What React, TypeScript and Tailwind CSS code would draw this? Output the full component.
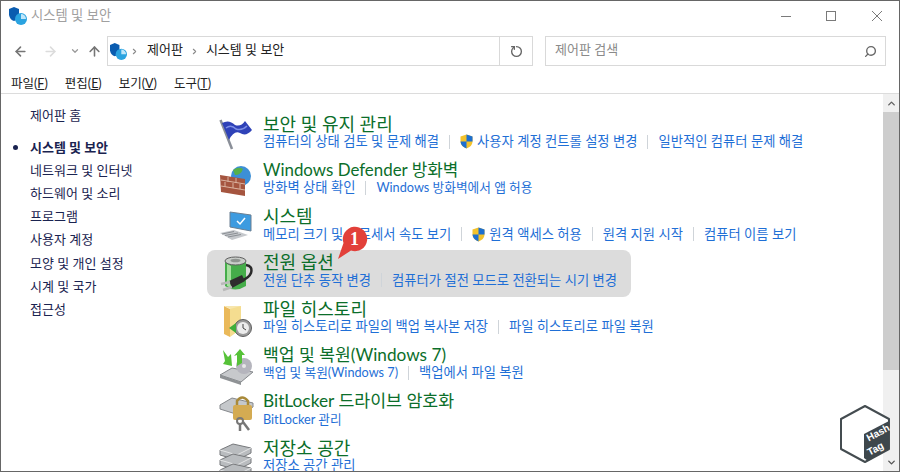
import { ArrowLeft, ArrowRight, ArrowUp, ChevronDown, ChevronRight, ChevronUp, RotateCw, Search } from "lucide-react";

const FONT = "font-['Lato','Noto_Sans_CJK_KR',sans-serif]";

const CpIcon = ({ size = 20 }: { size?: number }) => (
  <svg width={size} height={size} viewBox="1 1 18 18">
    <path d="M1 3 L6 1 L11 3 L11 9 Q10 14 6 15 Q2 14 1 9 Z" fill="#0a5cb0" />
    <circle cx="13" cy="13" r="6" fill="#2aa3e0" />
    <path d="M13 13 L13 8 A5 5 0 0 1 18 13 Z" fill="#bfe6fa" />
  </svg>
);

const FlagIcon = () => (
  <svg width="34" height="32" viewBox="0 0 34 32">
    <path d="M1.5 2 L13 31" stroke="#8a8f98" strokeWidth="2.5" />
    <path d="M3 5 Q10 1 16 7 Q22 9 26 3 L33 12 Q27 19 21 15 Q15 12 10 22 Z" fill="#2f42b8" />
    <path d="M7 10 Q12 6 17 11 Q23 13 28 8" stroke="#7d8fe6" strokeWidth="1.5" fill="none" />
  </svg>
);

const WallIcon = () => (
  <svg width="34" height="34" viewBox="0 0 34 34">
    <circle cx="22" cy="12" r="10" fill="#3c8fd6" />
    <path d="M14 6 Q20 2 24 5 Q22 11 16 11 Z" fill="#57b04a" />
    <path d="M1 11 L26 15 L26 32 L2 28 Z" fill="#a5553f" />
    <path d="M2 16 L26 20 M2 22 L26 26 M9 13 L9 18 M17 14 L17 19 M6 18 L6 23 M14 19 L14 24 M21 20 L21 25" stroke="#dbb3a0" strokeWidth="1" fill="none" />
  </svg>
);

const PcIcon = () => (
  <svg width="34" height="32" viewBox="0 0 34 32">
    <path d="M11 2 L32 5 L32 21 L11 17 Z" fill="#3d9be0" stroke="#6a7f92" />
    <path d="M18 11 L21 14 L26 8" stroke="#fff" strokeWidth="1.5" fill="none" />
    <path d="M1 23 L15 20 L29 25 L13 30 Z" fill="#c5c8cc" />
    <path d="M3 24 L15 21.5 M6 25.5 L19 23 M9 27 L22 24.5" stroke="#8b8f94" fill="none" />
  </svg>
);

const BatteryIcon = () => (
  <svg width="34" height="36" viewBox="0 0 34 36">
    <path d="M6 6 L6 30 Q16 37 27 30 L27 6 Z" fill="#45ad4a" />
    <path d="M8 8 L8 30 L12 32 L12 10 Z" fill="#a5e09d" />
    <ellipse cx="16.5" cy="5" rx="10.5" ry="4" fill="#c9cdc9" stroke="#5f5f5f" />
    <ellipse cx="16.5" cy="4.5" rx="5" ry="1.8" fill="#8f9490" />
    <path d="M27 9 Q34 10 32 17 Q30 22 22 25" stroke="#2a2a2a" strokeWidth="2.5" fill="none" />
    <path d="M10 25 L23 19 L26 25 L13 32 Z" fill="#2d2d2d" />
    <path d="M11 26 L2 28 M13 31 L4 34" stroke="#b9b9b9" strokeWidth="2.5" />
  </svg>
);

const FolderIcon = () => (
  <svg width="34" height="34" viewBox="0 0 34 34">
    <path d="M5 3 L11 6 L11 34 L5 31 Z" fill="#eab95a" />
    <path d="M11 3 L22 3 L22 26 L11 34 Z" fill="#f5dd90" />
    <path d="M5 3 L22 3 L11 6 Z" fill="#f7e6ad" />
    <circle cx="24" cy="25" r="8.5" fill="#9a9a9a" stroke="#5e5e5e" />
    <circle cx="24" cy="25" r="6" fill="#ececec" />
    <path d="M24 21 L24 25 L27 27" stroke="#444" fill="none" />
    <path d="M10 25 L17 20 L17 30 Z" fill="#3fae3c" />
  </svg>
);

const BackupIcon = () => (
  <svg width="36" height="36" viewBox="0 0 36 36">
    <path d="M1 26 L13 19 L34 23 L22 33 Z" fill="#c7c9cc" stroke="#85888c" />
    <path d="M1 26 L22 33 L22 36 L1 29 Z" fill="#8f9295" />
    <circle cx="25" cy="17" r="8" fill="#b5b5bd" />
    <circle cx="25" cy="17" r="2" fill="#e8e8e8" />
    <path d="M4 1 L9 8 L12 5 L13 17 L4 15 L6 12 Z" fill="#56c238" />
    <path d="M18 17 L18 6 L15 7 L21 0 L26 6 L23 6 L23 14 Z" fill="#56c238" />
  </svg>
);

const LockIcon = () => (
  <svg width="36" height="36" viewBox="0 0 36 36">
    <path d="M1 10 L13 3 L34 8 L34 12 L20 20 L1 14 Z" fill="#c5c8cb" stroke="#85888c" />
    <path d="M18 11 L18 6 Q23 -1 29 6 L29 11" stroke="#a98a3a" strokeWidth="2.5" fill="none" />
    <rect x="14" y="10" width="19" height="15" rx="2" fill="#d4ab52" />
    <circle cx="21" cy="26" r="3" fill="none" stroke="#777" strokeWidth="2" />
    <path d="M21 28 L21 36 M24 27 L30 35" stroke="#777" strokeWidth="2.5" />
  </svg>
);

const DriveIcon = () => (
  <svg width="36" height="36" viewBox="0 0 36 36">
    {[0, 10, 20].map((y) => (
      <g key={y}>
        <path d={`M1 ${8 + y} L14 ${2 + y} L32 ${6 + y} L32 ${11 + y} L18 ${18 + y} L1 ${13 + y} Z`} fill="#b9bcbf" stroke="#77797c" />
        <path d={`M1 ${8 + y} L18 ${13 + y} L32 ${6 + y}`} stroke="#e4e5e6" fill="none" />
        <rect x="16" y={14 + y} width="2" height="2.5" fill="#58c23a" />
      </g>
    ))}
  </svg>
);

const Sep = () => <span className="mx-[10px] h-[14px] w-px bg-[#cfd4d9]" />;

const ShieldIcon = () => (
  <svg width="13" height="15" viewBox="0 0 13 15" className="mr-[4px]">
    <path d="M6.5 0.5 L12.5 2.5 L12.5 8 Q12 12.5 6.5 14.5 Q1 12.5 0.5 8 L0.5 2.5 Z" fill="#f3c22b" />
    <path d="M6.5 0.5 L12.5 2.5 L12.5 7.5 L6.5 7.5 Z M6.5 7.5 L6.5 14.5 Q1 12.5 0.5 7.5 Z" fill="#1d6fd0" />
  </svg>
);

type LinkItem = { label: string; shield?: boolean; latin?: boolean };

const rows: { title: string; titleSize?: string; links: LinkItem[]; icon: React.ReactNode; active?: boolean }[] = [
  {
    title: "보안 및 유지 관리",
    icon: <FlagIcon />,
    links: [
      { label: "컴퓨터의 상태 검토 및 문제 해결" },
      { label: "사용자 계정 컨트롤 설정 변경", shield: true },
      { label: "일반적인 컴퓨터 문제 해결" },
    ],
  },
  {
    title: "Windows Defender 방화벽",
    titleSize: "text-[16.9px]",
    icon: <WallIcon />,
    links: [{ label: "방화벽 상태 확인" }, { label: "Windows 방화벽에서 앱 허용", latin: true }],
  },
  {
    title: "시스템",
    icon: <PcIcon />,
    links: [
      { label: "메모리 크기 및 프로세서 속도 보기" },
      { label: "원격 액세스 허용", shield: true },
      { label: "원격 지원 시작" },
      { label: "컴퓨터 이름 보기" },
    ],
  },
  {
    title: "전원 옵션",
    icon: <BatteryIcon />,
    active: true,
    links: [{ label: "전원 단추 동작 변경" }, { label: "컴퓨터가 절전 모드로 전환되는 시기 변경" }],
  },
  {
    title: "파일 히스토리",
    icon: <FolderIcon />,
    links: [{ label: "파일 히스토리로 파일의 백업 복사본 저장" }, { label: "파일 히스토리로 파일 복원" }],
  },
  {
    title: "백업 및 복원(Windows 7)",
    titleSize: "text-[17.2px]",
    icon: <BackupIcon />,
    links: [{ label: "백업 및 복원(Windows 7)", latin: true }, { label: "백업에서 파일 복원" }],
  },
  {
    title: "BitLocker 드라이브 암호화",
    titleSize: "text-[17.3px]",
    icon: <LockIcon />,
    links: [{ label: "BitLocker 관리", latin: true }],
  },
  {
    title: "저장소 공간",
    icon: <DriveIcon />,
    links: [{ label: "저장소 공간 관리" }],
  },
];

const sideLinks = ["네트워크 및 인터넷", "하드웨어 및 소리", "프로그램", "사용자 계정", "모양 및 개인 설정", "시계 및 국가", "접근성"];

const menus = [
  ["파일", "F"],
  ["편집", "E"],
  ["보기", "V"],
  ["도구", "T"],
];

export default function App() {
  return (
    <div className={`${FONT} relative flex h-[472px] w-[900px] flex-col overflow-hidden border border-[#666] bg-white`}>
      {/* title bar */}
      <div className="flex h-[29px] shrink-0 items-center pl-[8px]">
        <CpIcon size={18} />
        <span className="ml-[4px] text-[13.3px] text-[#a0a0a0]">시스템 및 보안</span>
        <svg width="101" height="10" viewBox="0 0 101 10" className="ml-auto mr-[17px] text-[#7a7a7a]" fill="none" stroke="currentColor">
          <path d="M0 5.5 H10" />
          <rect x="45.5" y="0.5" width="9" height="9" />
          <path d="M91 0 L101 10 M101 0 L91 10" />
        </svg>
      </div>

      {/* address bar */}
      <div className="flex shrink-0 items-center pl-[12px] pt-[6px]">
        <ArrowLeft size={15} strokeWidth={2.5} className="text-[#757575]" />
        <ArrowRight size={15} strokeWidth={2.5} className="ml-[15px] text-[#dcdcdc]" />
        <ChevronDown size={10} strokeWidth={3} className="ml-[12px] text-[#9a9a9a]" />
        <ArrowUp size={15} strokeWidth={2.5} className="ml-[7px] text-[#757575]" />
        <div className="ml-[5px] flex h-[30px] w-[426px] items-center border border-[#d9d9d9] pl-[2px]">
          <CpIcon size={17} />
          <ChevronRight size={9} strokeWidth={3} className="ml-[3px] text-[#8a8a8a]" />
          <span className="ml-[8px] pb-[3px] text-[13px] text-[#222]">제어판</span>
          <ChevronRight size={9} strokeWidth={3} className="ml-[7px] text-[#8a8a8a]" />
          <span className="ml-[7px] pb-[3px] text-[13px] text-[#222]">시스템 및 보안</span>
          <div className="ml-auto flex h-full w-[33px] items-center justify-center border-l border-[#d9d9d9]">
            <RotateCw size={13} strokeWidth={2.5} className="-rotate-90 text-[#666]" />
          </div>
        </div>
        <div className="ml-[12px] flex h-[30px] w-[341px] items-center border border-[#d9d9d9] pl-[9px] pr-[8px]">
          <span className="pb-[2px] text-[13px] text-[#8a8a8a]">제어판 검색</span>
          <Search size={13} strokeWidth={2.5} className="ml-auto -scale-x-100 text-[#666]" />
        </div>
      </div>

      {/* menu */}
      <div className="flex h-[28px] shrink-0 items-center gap-[17px] border-b border-[#dcdcdc] pl-[10px] pt-[10px] text-[12.5px] leading-none text-[#222]">
        {menus.map(([name, key]) => (
          <span key={key}>
            {name}(<span className="underline">{key}</span>)
          </span>
        ))}
      </div>

      <div className="flex min-h-0 flex-1">
        {/* side nav */}
        <div className="w-[206px] shrink-0 pl-[29px] pt-[10px] text-[13px] leading-[23.1px] text-[#1a2350]">
          <div>제어판 홈</div>
          <div className="relative mt-[9px] font-bold">
            <span className="absolute -left-[17px] top-[9px] h-[5px] w-[5px] rounded-full bg-[#1a2350]" />
            시스템 및 보안
          </div>
          {sideLinks.map((s) => (
            <div key={s}>{s}</div>
          ))}
        </div>

        {/* content */}
        <div className="min-w-0 flex-1 pt-[17.5px]">
          {rows.map((r) => (
            <div
              key={r.title}
              className={`flex h-[46.3px] w-[424px] whitespace-nowrap rounded-lg pl-[12px] ${r.active ? "bg-[#dcdcdc]" : ""}`}
            >
              <div className="flex w-[44px] shrink-0 items-start pt-[6px]">{r.icon}</div>
              <div className="flex flex-col">
                <div className={`h-[21.5px] leading-[24px] text-[#0b6e2a] ${r.titleSize ?? "text-[18px]"}`}>{r.title}</div>
                <div className="flex h-[17px] items-center leading-[17px] text-[#1f6fd6]">
                  {r.links.map((l, i) => (
                    <span key={l.label} className={`flex items-center ${l.latin ? "text-[12.7px]" : "text-[13.3px]"}`}>
                      {i > 0 && <Sep />}
                      {l.shield && <ShieldIcon />}
                      {l.label}
                    </span>
                  ))}
                </div>
              </div>
            </div>
          ))}
        </div>

        {/* scrollbar */}
        <div className="flex w-[16px] shrink-0 flex-col items-center bg-[#f0f0f0]">
          <ChevronUp size={11} strokeWidth={3} className="mt-[4px] h-[11px] text-[#606060]" />
          <div className="mt-[3px] h-[258px] w-full bg-[#cdcdcd]" />
          <ChevronDown size={11} strokeWidth={3} className="mt-auto mb-[3px] text-[#555]" />
        </div>
      </div>

      {/* step badge */}
      <svg width="40" height="44" viewBox="0 0 40 44" className="absolute left-[332px] top-[221px]">
        <path d="M5 37 L10.5 21 A12.2 12.2 0 1 1 18 28.5 Z" fill="#e2403a" />
      </svg>
      <span className="absolute left-[349px] top-[226px] font-['Liberation_Serif',serif] text-[18px] font-bold leading-[24px] text-white">1</span>

      {/* watermark */}
      <div className="absolute left-[839px] top-[403px] h-[60px] w-[50px]">
        <svg width="50" height="60" viewBox="0 0 50 60">
          <path d="M25 2 L49 15 L49 45 L25 58 L1 45 L1 15 Z" fill="#fff" stroke="#444c50" strokeWidth="2" strokeLinejoin="round" />
          <path d="M49 17 L49 45 L28 57 L24 54 L24 30 Z" fill="#3e474c" />
        </svg>
        <span className="absolute left-[26px] top-[24px] -rotate-[28deg] font-['Liberation_Sans',sans-serif] text-[10px] font-bold leading-[10px] text-white">Hash</span>
        <span className="absolute left-[27px] top-[40px] -rotate-[28deg] font-['Liberation_Sans',sans-serif] text-[10px] font-bold leading-[10px] text-white">Tag</span>
      </div>
    </div>
  );
}
